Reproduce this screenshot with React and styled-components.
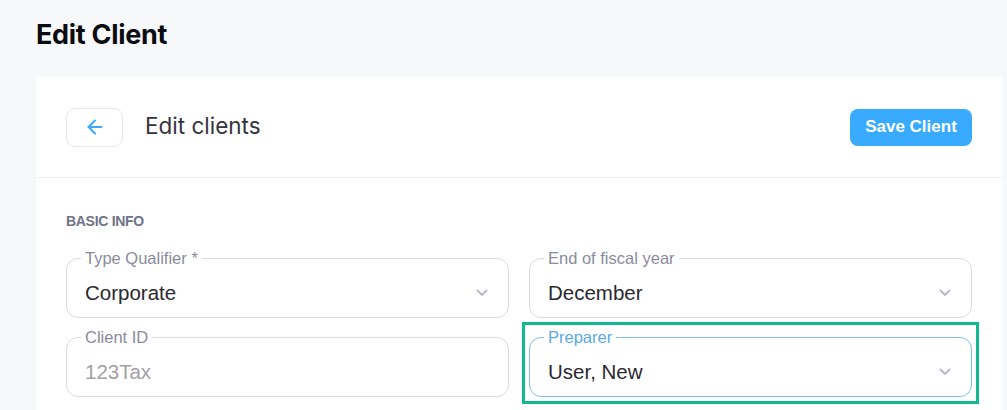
import styled, { createGlobalStyle } from "styled-components";
import { ArrowLeft } from "lucide-react";

const GlobalStyle = createGlobalStyle`
  body {
    margin: 0;
    background: #f7f8fa;
    font-family: "Liberation Sans", Arial, sans-serif;
  }
`;

const Page = styled.main`
  padding: 0 5px 0 36px;
`;

const Title = styled.h1`
  margin: 0;
  height: 77px;
  padding-top: 17px;
  box-sizing: border-box;
  font-family: Inter, sans-serif;
  font-size: 27px;
  font-weight: 700;
  letter-spacing: -0.3px;
  line-height: 36px;
  color: #0b0b12;
`;

const Card = styled.section`
  background: #fff;
`;

const CardHeader = styled.header`
  height: 100px;
  padding: 0 30px;
  display: flex;
  align-items: center;
  border-bottom: 1px solid #ececf0;
`;

const BackButton = styled.button`
  width: 57px;
  height: 39px;
  border: 1px solid #e7e8f0;
  border-radius: 9px;
  background: #fff;
  color: #3ea9f7;
  display: flex;
  align-items: center;
  justify-content: center;
  margin-right: 22px;
  cursor: pointer;
`;

const HeaderTitle = styled.h2`
  margin: 0 0 4px;
  flex: 1;
  font-family: Inter, sans-serif;
  font-size: 22.5px;
  font-weight: 400;
  color: #34343e;
`;

const SaveButton = styled.button`
  width: 122px;
  height: 37px;
  border: none;
  border-radius: 8px;
  background: #38aaff;
  color: #fff;
  font-family: "Liberation Sans", Arial, sans-serif;
  font-size: 17px;
  font-weight: 700;
  cursor: pointer;
`;

const Body = styled.div`
  padding: 35px 30px 30px;
`;

const SectionLabel = styled.h3`
  margin: 0 0 20px;
  font-size: 14px;
  line-height: 17px;
  font-weight: 700;
  color: #6f7288;
  letter-spacing: -0.3px;
`;

const Grid = styled.div`
  display: grid;
  grid-template-columns: 1fr 1fr;
  column-gap: 20px;
  row-gap: 11px;
`;

const Field = styled.fieldset`
  margin: 0;
  padding: 0 20px 0 14px;
  border: 1px solid ${(p) => (p.$focused ? "#7dbef0" : "#d9dae3")};
  border-radius: 12px;
  min-width: 0;
`;

const Legend = styled.legend`
  padding: 0 4px;
  font-size: 16.5px;
  line-height: 16px;
  color: ${(p) => (p.$focused ? "#5aa8ea" : "#8a8b9c")};
`;

const Row = styled.div`
  height: 51px;
  padding: 2px 0 0 4px;
  box-sizing: border-box;
  display: flex;
  align-items: center;
  justify-content: space-between;
`;

const Value = styled.span`
  font-size: 20.5px;
  color: ${(p) => (p.$disabled ? "#a39fa6" : "#2b2832")};
`;

const Highlight = styled.div`
  margin: -7px;
  padding: 4px;
  border: 3px solid #12b98e;
`;

const Chevron = () => (
  <svg width="12" height="8" viewBox="0 0 12 8" fill="none">
    <path d="M1.5 1.5 6 6l4.5-4.5" stroke="#b9bbc9" strokeWidth="2" strokeLinecap="round" strokeLinejoin="round" />
  </svg>
);

const SelectField = ({ label, value, focused, disabled, select = true }) => (
  <Field $focused={focused}>
    <Legend $focused={focused}>{label}</Legend>
    <Row>
      <Value $disabled={disabled}>{value}</Value>
      {select && <Chevron />}
    </Row>
  </Field>
);

export default function App() {
  return (
    <Page>
      <GlobalStyle />
      <Title>Edit Client</Title>
      <Card>
        <CardHeader>
          <BackButton aria-label="Back">
            <ArrowLeft size={22} strokeWidth={2.2} />
          </BackButton>
          <HeaderTitle>Edit clients</HeaderTitle>
          <SaveButton>Save Client</SaveButton>
        </CardHeader>
        <Body>
          <SectionLabel>BASIC INFO</SectionLabel>
          <Grid>
            <SelectField label="Type Qualifier *" value="Corporate" />
            <SelectField label="End of fiscal year" value="December" />
            <SelectField label="Client ID" value="123Tax" disabled select={false} />
            <Highlight>
              <SelectField label="Preparer" value="User, New" focused />
            </Highlight>
          </Grid>
        </Body>
      </Card>
    </Page>
  );
}
